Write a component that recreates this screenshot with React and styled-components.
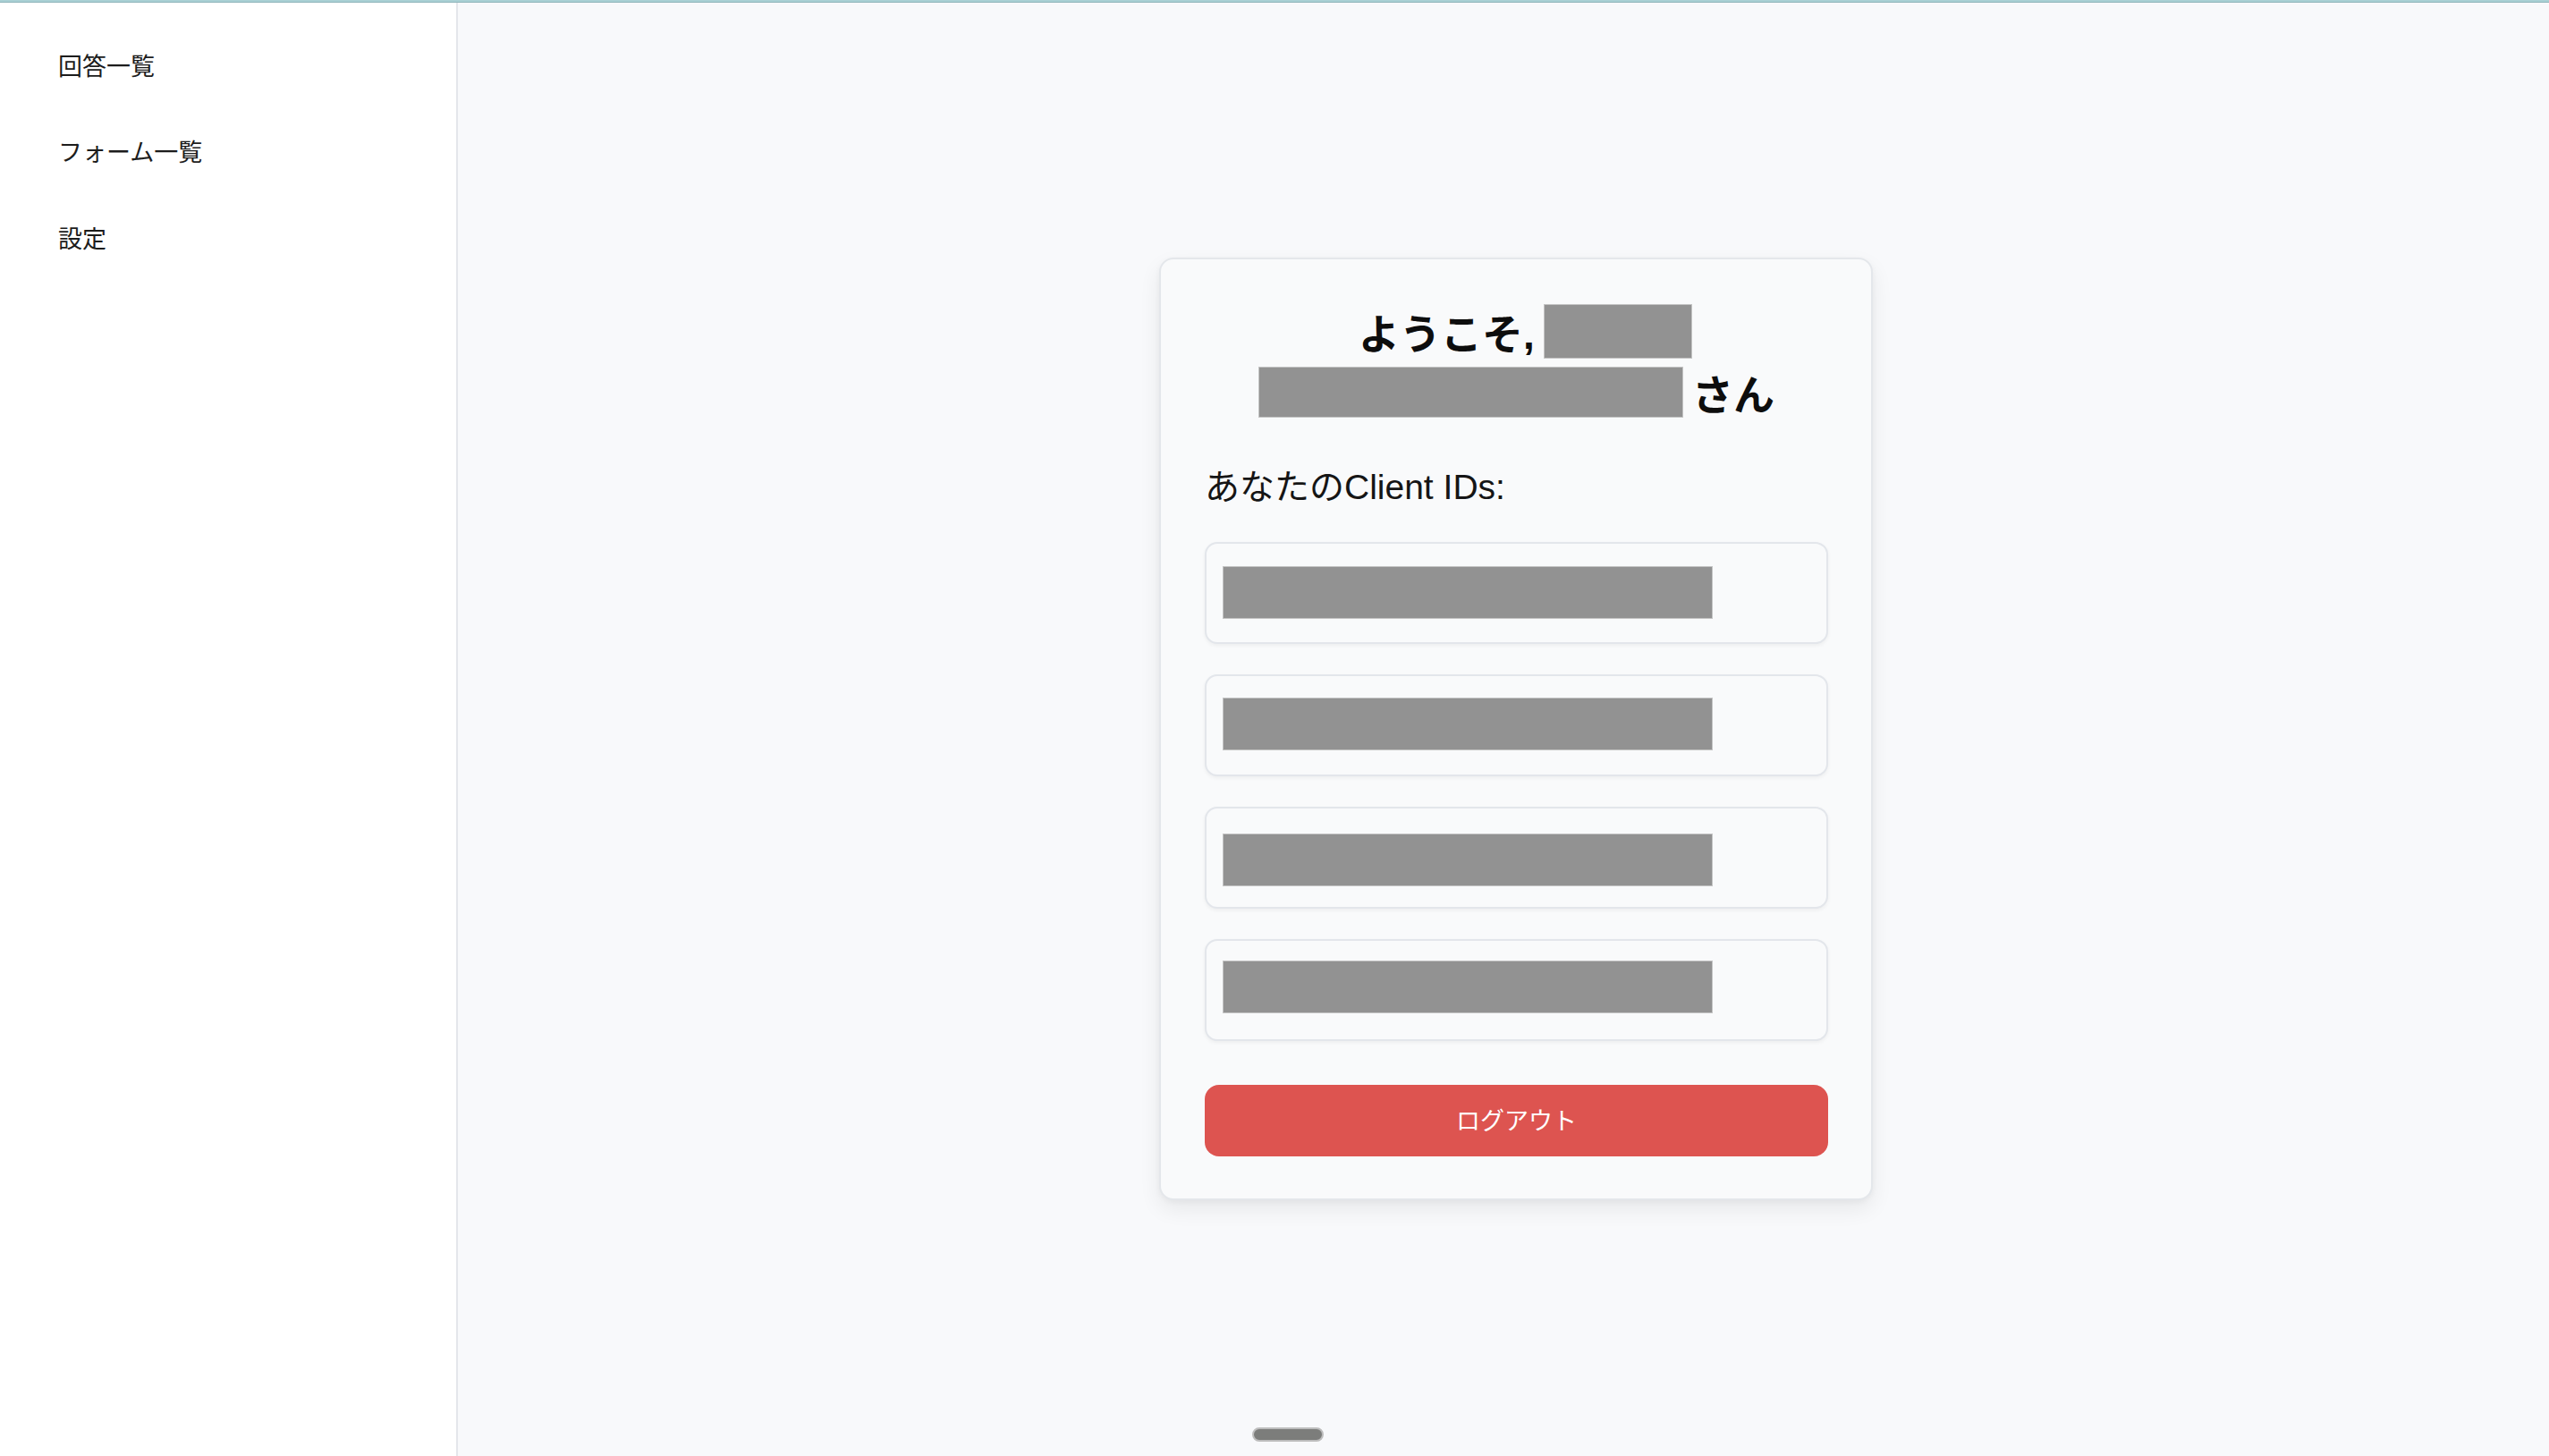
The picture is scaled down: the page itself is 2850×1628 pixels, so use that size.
import React from "react";
import styled, { createGlobalStyle } from "styled-components";

const GlobalStyle = createGlobalStyle`
  html, body {
    margin: 0;
    padding: 0;
    background: #f8f9fb;
    font-family: "Liberation Sans", "Noto Sans CJK JP", sans-serif;
    color: #111;
  }
`;

const navItems = ["回答一覧", "フォーム一覧", "設定"];
// vertical offset of the redaction inside each box (from the outer top edge)
const clientIds = [{ top: 27 }, { top: 26 }, { top: 30 }, { top: 24 }];

export default function App() {
  return (
    <>
      <GlobalStyle />
      <TopBar />
      <Layout>
        <Sidebar>
          <Nav>
            {navItems.map((item) => (
              <NavItem key={item}>{item}</NavItem>
            ))}
          </Nav>
        </Sidebar>
        <Main>
          <Card>
            <Heading>
              <HeadLine $shift={20}>
                <span>ようこそ,</span>
                <Redact $w={166} $h={61} />
              </HeadLine>
              <HeadLine>
                <Redact $w={475} $h={57} />
                <span>さん</span>
              </HeadLine>
            </Heading>
            <Label>あなたのClient IDs:</Label>
            <IdList>
              {clientIds.map((id, i) => (
                <IdBox key={i} $top={id.top}>
                  <Redact $w={548} $h={59} />
                </IdBox>
              ))}
            </IdList>
            <LogoutButton>ログアウト</LogoutButton>
          </Card>
        </Main>
      </Layout>
      <HomeBar />
    </>
  );
}

const TopBar = styled.div`
  height: 2px;
  background: #a9d0d4;
  border-bottom: 1px solid #8fb5ba;
`;

const Layout = styled.div`
  display: flex;
  min-height: calc(100vh - 3px);
`;

const Sidebar = styled.aside`
  width: 510px;
  flex-shrink: 0;
  background: #ffffff;
  border-right: 2px solid #e4e6eb;
`;

const Nav = styled.nav`
  display: flex;
  flex-direction: column;
  padding: 21px 0 0 65px;
`;

const NavItem = styled.div`
  height: 96.5px;
  display: flex;
  align-items: center;
  font-family: "Noto Sans CJK JP", sans-serif;
  font-size: 27px;
  color: #1c1c1c;
  cursor: pointer;
`;

const Main = styled.main`
  flex: 1;
  display: flex;
  justify-content: center;
  align-items: flex-start;
  padding: 285px 0 0 28px;
  background: #f8f9fb;
`;

const Card = styled.section`
  width: 798px;
  box-sizing: border-box;
  padding: 0 48px 47px 49px;
  background: #f9fafb;
  border: 2px solid #e4e7eb;
  border-radius: 16px;
  box-shadow: 0 10px 24px rgba(0, 0, 0, 0.07), 0 2px 6px rgba(0, 0, 0, 0.04);
`;

const Heading = styled.div`
  display: flex;
  flex-direction: column;
  align-items: center;
  margin-top: 46px;
  font-size: 46px;
  font-weight: 700;
  color: #0d0d0d;
`;

const HeadLine = styled.div`
  display: flex;
  align-items: center;
  gap: 10px;
  height: 68px;
  margin-left: ${({ $shift = 0 }) => $shift}px;
`;

const Redact = styled.div`
  width: ${({ $w }) => $w}px;
  height: ${({ $h }) => $h}px;
  box-sizing: border-box;
  background: #929292;
  border: 1px solid #c4c4c4;
  flex-shrink: 0;
`;

const Label = styled.div`
  margin-top: 44px;
  height: 50px;
  display: flex;
  align-items: center;
  font-size: 39px;
  color: #151515;
`;

const IdList = styled.div`
  display: flex;
  flex-direction: column;
  gap: 34px;
  margin-top: 40px;
`;

const IdBox = styled.div`
  height: 114px;
  box-sizing: border-box;
  padding: ${({ $top }) => $top - 2}px 18px 0;
  background: #f9fafb;
  border: 2px solid #e3e6eb;
  border-radius: 14px;
  box-shadow: 0 2px 4px rgba(0, 0, 0, 0.05);
`;

const LogoutButton = styled.button`
  display: flex;
  align-items: center;
  justify-content: center;
  width: 100%;
  height: 80px;
  margin-top: 49px;
  padding: 0 0 4px;
  border: none;
  border-radius: 16px;
  background: #dd5450;
  color: #ffffff;
  font-family: "Noto Sans CJK JP", sans-serif;
  font-size: 27px;
  cursor: pointer;
`;

const HomeBar = styled.div`
  position: fixed;
  left: 1400px;
  bottom: 16px;
  width: 80px;
  height: 16px;
  box-sizing: border-box;
  border-radius: 8px;
  background: #7c7d7b;
  border: 2px solid #bdbdbd;
`;
